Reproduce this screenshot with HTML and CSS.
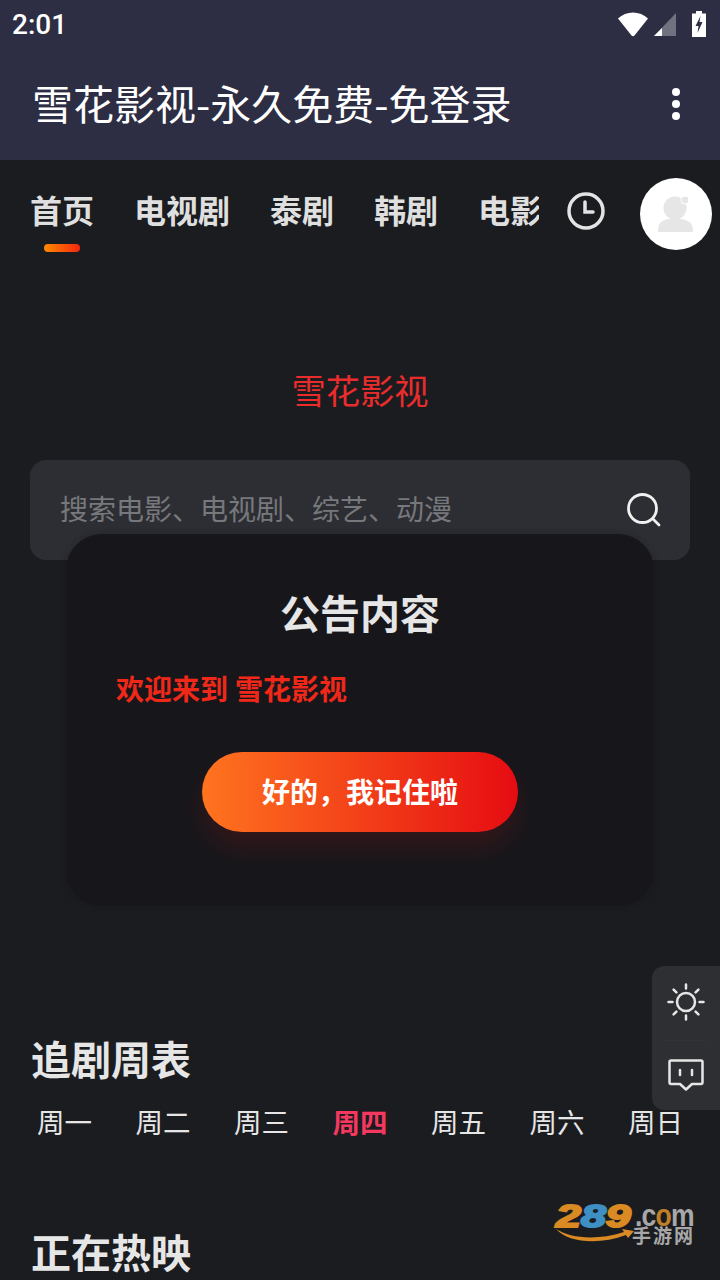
FILE: index.html
```html
<!DOCTYPE html>
<html>
<head>
	<meta charset="utf-8">
	<meta name="viewport" content="width=device-width, initial-scale=1">
	<title>雪花影视</title>
	<link rel="stylesheet" href="styles.css">
</head>
<body>

	<div class="top_bar">
		<div class="status">
			<span class="time">2:01</span>
			<div class="status_icons">
				<svg width="32" height="26" viewBox="0 0 32 26"><path d="M1 7.500C5 3.500 10.500 1.500 16 1.500S27 3.500 31 7.500L17.500 24.500Q16 26 14.500 24.500Z" fill="#fff"/></svg>
				<svg class="signal" width="22" height="23" viewBox="0 0 22 23"><path d="M22 0V23H0Z" fill="#71727f"/><path d="M8 15V23H0Z" fill="#fff"/></svg>
				<svg class="battery" width="14" height="26" viewBox="1 0 14 26"><path d="M5 0H11V2.500H15V26H1V2.500H5Z" fill="#fff"/><path d="M9.500 5L4.500 15H7.500L6.500 22L11.500 11H8.500Z" fill="#2d2e44"/></svg>
			</div>
		</div>
		<div class="toolbar">
			<span class="app_title">雪花影视-永久免费-免登录</span>
			<div class="more"><i></i><i></i><i></i></div>
		</div>
	</div>

	<div class="tabs_row">
		<div class="tabs">
			<div class="tab active">首页</div>
			<div class="tab">电视剧</div>
			<div class="tab">泰剧</div>
			<div class="tab">韩剧</div>
			<div class="tab">电影</div>
		</div>
		<svg class="clock" width="40" height="40" viewBox="0 0 40 40" fill="none" stroke="#e3e3e3" stroke-width="3.500" stroke-linecap="round"><circle cx="20" cy="20" r="17"/><path d="M19 11V21H27"/></svg>
		<div class="avatar">
			<svg width="40" height="36" viewBox="0 0 40 36"><circle cx="19" cy="12" r="11.500" fill="#e6e6e6"/><path d="M2 36C2 30 3 26 9 24C14 22 24 22 29 24C36 26 37 30 37 36Z" fill="#e6e6e6"/><circle cx="29" cy="4" r="4" fill="#e6e6e6" stroke="#fff" stroke-width="1"/></svg>
		</div>
	</div>

	<div class="site_name">雪花影视</div>

	<div class="search">
		<span>搜索电影、电视剧、综艺、动漫</span>
		<svg width="36" height="36" viewBox="0 0 36 36" fill="none" stroke="#f0f0f0" stroke-width="2.800" stroke-linecap="round"><circle cx="16.500" cy="16.500" r="14"/><path d="M27 27L33 33"/></svg>
	</div>

	<div class="week_section">
		<h2>追剧周表</h2>
		<div class="week">
			<span>周一</span>
			<span>周二</span>
			<span>周三</span>
			<span class="today">周四</span>
			<span>周五</span>
			<span>周六</span>
			<span>周日</span>
		</div>
	</div>

	<h2 class="hot">正在热映</h2>

	<!-- overlays -->
	<div class="notice">
		<h3>公告内容</h3>
		<p>欢迎来到 雪花影视</p>
		<button>好的，我记住啦</button>
	</div>

	<div class="float_panel">
		<svg width="40" height="40" viewBox="0 0 40 40" fill="none" stroke="#e6e6e6" stroke-width="2.500" stroke-linecap="round"><circle cx="20" cy="20" r="9"/><path d="M20 2.500V6.500M20 33.500V37.500M2.500 20H6.500M33.500 20H37.500M7.600 7.600L10.400 10.400M29.600 29.600L32.400 32.400M7.600 32.400L10.400 29.600M29.600 10.400L32.400 7.600"/></svg>
		<div class="panel_line"></div>
		<svg width="36" height="34" viewBox="0 0 36 34" fill="none" stroke="#e6e6e6" stroke-width="2.500" stroke-linejoin="round" stroke-linecap="round"><path d="M3 1.500H33Q34.500 1.500 34.500 3V23Q34.500 25 33 25H24L18 30.500L12 25H3Q1.500 25 1.500 23V3Q1.500 1.500 3 1.500Z"/><path d="M12 11V16M24 11V16"/></svg>
	</div>

	<div class="watermark">
		<div class="wm_num"><b>2</b><b class="blue">8</b><b>9</b></div>
		<div class="wm_right">
			<span class="wm_com">.c<i>o</i>m</span>
			<span class="wm_cn">手游网</span>
		</div>
		<svg class="swoosh" width="78" height="14" viewBox="0 0 78 14"><path d="M0 0C14 9 40 12 68 3L66 0L78 2L72 9L70 6C44 16 12 14 0 0Z" fill="#d98a22"/></svg>
	</div>

</body>
</html>
```

FILE: styles.css
```css
* {
	box-sizing: border-box;
}
html, body {
	margin: 0;
	padding: 0;
}
body {
	position: relative;
	width: 720px;
	height: 1280px;
	overflow: hidden;
	background: #1b1c20;
	color: #e6e6e6;
	font-family: Roboto, "Noto Sans CJK SC", sans-serif;
}
.top_bar {
	height: 160px;
	background: #2d2e44;
	color: #fff;
}
.status {
	height: 48px;
	padding: 0 14px 0 12px;
	display: flex;
	align-items: center;
	justify-content: space-between;
}
.time {
	font-size: 28px;
	font-weight: 500;
}
.status_icons {
	display: flex;
	align-items: center;
	gap: 5px;
}
.signal {
	margin-right: 11px;
}
.toolbar {
	height: 112px;
	padding: 0 40px 4px 32px;
	display: flex;
	align-items: center;
	justify-content: space-between;
}
.app_title {
	font-family: "Noto Sans CJK SC", sans-serif;
	font-size: 41px;
	line-height: 106px;
}
.more {
	display: flex;
	flex-direction: column;
	gap: 4px;
	margin-top: 4px;
}
.more i {
	width: 8px;
	height: 8px;
	border-radius: 50%;
	background: #fff;
}
.tabs_row {
	height: 108px;
	display: flex;
	align-items: center;
}
.tabs {
	width: 539px;
	height: 108px;
	padding-left: 30px;
	display: flex;
	gap: 40px;
	overflow: hidden;
	flex: none;
}
.tab {
	position: relative;
	flex: none;
	font-size: 32px;
	font-weight: 700;
	line-height: 104px;
	color: #dfdfdf;
}
.tab.active::after {
	content: "";
	position: absolute;
	left: 14px;
	top: 84px;
	width: 36px;
	height: 8px;
	border-radius: 4px;
	background: linear-gradient(90deg, #ff8a00, #f5260f);
}
.clock {
	margin: -6px 0 0 27px;
	flex: none;
}
.avatar {
	width: 72px;
	height: 72px;
	margin-left: 34px;
	border-radius: 50%;
	background: #fff;
	display: flex;
	align-items: center;
	justify-content: center;
	flex: none;
}
.site_name {
	margin-top: 98px;
	text-align: center;
	font-size: 34.300px;
	line-height: 52px;
	color: #ea2c2c;
}
.search {
	margin: 42px 30px 0;
	height: 100px;
	padding: 0 28px 0 30px;
	border-radius: 16px;
	background: #2d2e33;
	display: flex;
	align-items: center;
	justify-content: space-between;
	font-size: 28px;
	line-height: 36px;
	color: #77787c;
}
.search span {
	margin-top: 2px;
}
.week_section {
	margin-top: 473px;
}
h2 {
	margin: 0;
	padding-left: 31px;
	font-size: 40px;
	line-height: 58px;
	font-weight: 700;
	color: #e6e6e6;
}
.week {
	margin-top: 13px;
	padding: 0 37px;
	display: flex;
	justify-content: space-between;
	font-size: 27.500px;
	line-height: 40px;
}
.today {
	color: #f5385f;
	font-weight: 700;
}
.hot {
	margin-top: 82px;
}
.notice {
	position: absolute;
	left: 66px;
	top: 534px;
	width: 588px;
	height: 372px;
	padding: 52px 50px 0;
	border-radius: 36px;
	background: #17171b;
	box-shadow: 0 0 6px rgba(20, 20, 24, 0.35);
	display: flex;
	flex-direction: column;
	align-items: center;
}
.notice h3 {
	margin: 0;
	font-size: 40px;
	line-height: 60px;
	font-weight: 700;
}
.notice p {
	align-self: flex-start;
	margin: 23px 0 0;
	font-size: 28px;
	line-height: 44px;
	font-weight: 700;
	color: #f0281a;
}
.notice button {
	width: 316px;
	height: 80px;
	margin-top: 39px;
	padding: 0 0 3px;
	border: none;
	border-radius: 40px;
	background: linear-gradient(90deg, #ff741f, #e60c12);
	box-shadow: 0 16px 24px rgba(230, 20, 20, 0.13);
	color: #fff;
	font-family: inherit;
	font-size: 28px;
	font-weight: 700;
}
.float_panel {
	position: absolute;
	left: 652px;
	top: 966px;
	width: 68px;
	height: 144px;
	padding: 16px 0 0 0;
	border-radius: 12px 0 0 12px;
	background: #2d2f33;
	display: flex;
	flex-direction: column;
	align-items: center;
	gap: 18px;
}
.panel_line {
	width: 40px;
	height: 1px;
	background: #333539;
}
.watermark {
	position: absolute;
	left: 556px;
	top: 1204px;
	display: flex;
	align-items: flex-start;
	font-family: "Liberation Sans", sans-serif;
}
.wm_num {
	width: 79px;
	font-size: 32px;
	line-height: 25px;
	font-style: italic;
	color: #d98a22;
	-webkit-text-stroke: 2px currentColor;
	transform: scaleX(1.400);
	transform-origin: left top;
}
.wm_num .blue {
	color: #3d8fc4;
}
.wm_right {
	display: flex;
	flex-direction: column;
	color: #a8a8a8;
	font-weight: 700;
}
.wm_com {
	width: 60px;
	font-size: 32px;
	line-height: 23px;
	letter-spacing: -1px;
	white-space: nowrap;
	transform: scaleX(0.830);
	transform-origin: left top;
}
.wm_com i {
	font-style: normal;
	color: #c07f28;
}
.wm_cn {
	font-family: "Noto Sans CJK SC", sans-serif;
	font-size: 19px;
	line-height: 16px;
	letter-spacing: 2px;
	white-space: nowrap;
	margin-left: -3px;
}
.swoosh {
	position: absolute;
	left: 0;
	top: 25px;
}
```
